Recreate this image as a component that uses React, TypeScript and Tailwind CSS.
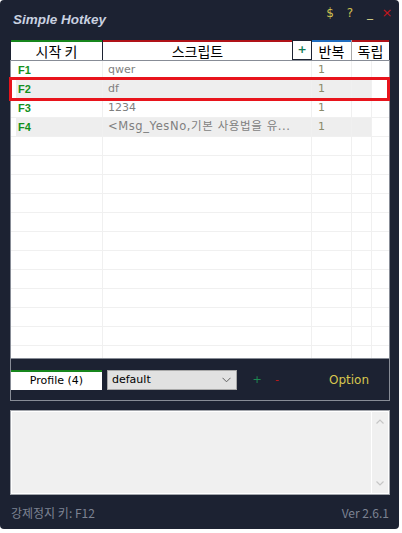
import React from "react";

const rows = [
  { k: "F1", s: "qwer", r: "1", grey: false, wide: false },
  { k: "F2", s: "df", r: "1", grey: true, wide: false },
  { k: "F3", s: "1234", r: "1", grey: false, wide: false },
  { k: "F4", s: "<Msg_YesNo,기본 사용법을 유...", r: "1", grey: true, wide: true },
];

const emptyCount = 12;

function Row({ k, s, r, grey, wide }: { k: string; s: string; r: string; grey: boolean; wide: boolean }) {
  const bg = grey ? "bg-[#eeeeee]" : "bg-white";
  return (
    <div className="flex h-[19px] shrink-0 border-b border-[#f0f0f0] bg-white">
      <div className="w-[5px] shrink-0" />
      <div className={`flex ${bg}`}>
        <div className="w-[87px] shrink-0 border-r border-[#f0f0f0] pl-[2px] flex items-center text-[11px] font-bold text-[#14901c] [font-family:'Liberation_Sans',Arial,sans-serif]">
          {k}
        </div>
        <div
          className={`w-[209px] shrink-0 border-r border-[#f0f0f0] pl-[5px] flex items-center text-[#7f7f7f] whitespace-nowrap overflow-hidden ${
            wide ? "text-[11.5px] tracking-[0.6px]" : "text-[11px]"
          }`}
        >
          {s}
        </div>
        <div className="w-[40px] shrink-0 border-r border-[#f0f0f0] pl-[6px] flex items-center text-[11px] text-[#8a8a6a]">
          {r}
        </div>
        <div className="w-[20px] shrink-0 border-r border-[#f0f0f0]" />
      </div>
      <div className="flex-1" />
    </div>
  );
}

export default function App() {
  return (
    <div className="bg-white w-[402px] h-[533px] [font-family:'DejaVu_Sans','Noto_Sans_CJK_KR',sans-serif]">
      <div className="relative flex flex-col w-[399px] h-[529px] bg-[#1c2232] rounded-[4px] overflow-hidden">
        {/* Title bar */}
        <div className="h-[40px] flex justify-between shrink-0">
          <div className="pl-[13px] pt-[12px] leading-[16px] text-[13.5px] font-bold italic text-[#c9d1e0] [font-family:'Liberation_Sans',Arial,sans-serif]">
            Simple Hotkey
          </div>
          <div className="flex pt-[6px] pr-[5px] leading-[14px] text-[12px] [font-family:'DejaVu_Sans',sans-serif]">
            <span className="w-[20px] text-center text-[#cfc050]">$</span>
            <span className="w-[20px] text-center text-[#cfc050]">?</span>
            <span className="w-[20px] text-center text-[#d6d68a]">_</span>
            <span className="w-[14px] text-center text-[#c4161c] text-[13px]">×</span>
          </div>
        </div>

        {/* Header */}
        <div className="flex h-[20px] ml-[11px] shrink-0 text-[14px] text-black [font-family:'Noto_Sans_CJK_KR',sans-serif]">
          <div className="w-[91px] bg-white border-t-2 border-[#16861c] flex items-center justify-center leading-none">시작 키</div>
          <div className="w-[189px] ml-[1px] bg-white border-t-2 border-[#b01218] flex items-center justify-center leading-none">스크립트</div>
          <div className="w-[20px] bg-white border border-[#1c2232] flex items-center justify-center text-[#0f7a55] text-[11px] font-bold [font-family:'DejaVu_Sans',sans-serif]">+</div>
          <div className="w-[39px] bg-white border-t-2 border-[#1f6cbf] flex items-center justify-center leading-none">반복</div>
          <div className="w-[1px] bg-[#a8a8a8]" />
          <div className="w-[37px] bg-white border-t-2 border-[#b01218] flex items-center justify-center leading-none">독립</div>
        </div>

        {/* Body */}
        <div className="ml-[10px] w-[380px] h-[299px] shrink-0 border border-[#878c96] bg-white overflow-hidden flex flex-col">
          {rows.map((r) => (
            <Row key={r.k} {...r} />
          ))}
          {Array.from({ length: emptyCount }).map((_, i) => (
            <Row key={"e" + i} k="" s="" r="" grey={false} wide={false} />
          ))}
        </div>

        {/* Profile area */}
        <div className="ml-[10px] w-[380px] h-[42px] shrink-0 border-x border-b border-[#878c96] flex items-start pt-[11px] text-[11px]">
          <div className="w-[91px] h-[20px] bg-white border-t-2 border-[#16861c] flex items-center justify-center text-black">
            Profile (4)
          </div>
          <div className="ml-[5px] w-[130px] h-[20px] bg-[#e1e1e1] border border-[#a8a8a8] flex items-center justify-between pl-[4px] pr-[5px] text-black">
            <span>default</span>
            <svg width="9" height="6" viewBox="0 0 9 6">
              <path d="M0.5 0.8 L4.5 4.8 L8.5 0.8" fill="none" stroke="#606060" strokeWidth="1" />
            </svg>
          </div>
          <span className="ml-[10px] w-[20px] h-[20px] flex items-center justify-center text-[#1c8a52] text-[11px]">+</span>
          <span className="w-[20px] h-[20px] flex items-center justify-center text-[#c41818] text-[11px]">-</span>
          <span className="ml-[42px] h-[20px] flex items-center text-[#d6c64e] text-[12px]">Option</span>
        </div>

        {/* Log box */}
        <div className="mt-[9px] ml-[10px] w-[380px] h-[85px] shrink-0 border border-[#a2a5ab] bg-white p-[1px]">
          <div className="flex h-full bg-[#f0f0f0]">
            <div className="flex-1" />
            <div className="w-[1px] bg-white" />
            <div className="w-[16px] flex flex-col items-center justify-between py-[7px]">
              <svg width="8" height="5" viewBox="0 0 8 5">
                <path d="M0.5 4.5 L4 1 L7.5 4.5" fill="none" stroke="#c6c6c6" strokeWidth="1.2" />
              </svg>
              <svg width="8" height="5" viewBox="0 0 8 5">
                <path d="M0.5 0.5 L4 4 L7.5 0.5" fill="none" stroke="#c6c6c6" strokeWidth="1.2" />
              </svg>
            </div>
          </div>
        </div>

        {/* Footer */}
        <div className="h-[34px] shrink-0 flex items-center justify-between pl-[11px] pr-[10px] pt-[2px] text-[12px] text-[#7c8392] [font-family:'Noto_Sans_CJK_KR',sans-serif]">
          <span>강제정지 키: F12</span>
          <span>Ver 2.6.1</span>
        </div>

        {/* Selection highlight */}
        <div className="absolute left-[9px] top-[77px] w-[381px] h-[24px] border-[3px] border-[#e8141c] pointer-events-none" />
      </div>
    </div>
  );
}
